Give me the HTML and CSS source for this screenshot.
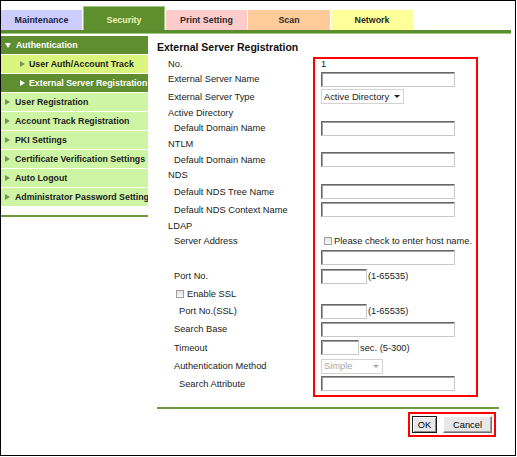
FILE: index.html
```html
<!DOCTYPE html>
<html>
<head>
<meta charset="utf-8">
<link rel="stylesheet" href="styles.css">
</head>
<body>
<div class="frame">
  <div class="tabs">
    <div class="tab tab-maint">Maintenance</div>
    <div class="tab tab-sec">Security</div>
    <div class="tab tab-print">Print Setting</div>
    <div class="tab tab-scan">Scan</div>
    <div class="tab tab-net">Network</div>
  </div>
  <div class="tabline"></div>
  <div class="body">
    <nav class="side">
      <ul class="menu">
        <li class="item dark"><span class="tri-down"></span>Authentication</li>
        <li class="item sub yel"><span class="tri"></span>User Auth/Account Track</li>
        <li class="item sub dark"><span class="tri"></span>External Server Registration</li>
        <li class="item"><span class="tri"></span>User Registration</li>
        <li class="item"><span class="tri"></span>Account Track Registration</li>
        <li class="item"><span class="tri"></span>PKI Settings</li>
        <li class="item"><span class="tri"></span>Certificate Verification Settings</li>
        <li class="item"><span class="tri"></span>Auto Logout</li>
        <li class="item"><span class="tri"></span>Administrator Password Setting</li>
      </ul>
      <div class="sideline"></div>
    </nav>
    <main class="main">
      <h1 class="title">External Server Registration</h1>
      <div class="form">
        <div class="row first h13"><div class="lbl">No.</div><div class="val">1</div></div>
        <div class="row h18"><div class="lbl">External Server Name</div><div class="val"><input class="txt" type="text"></div></div>
        <div class="row h17"><div class="lbl">External Server Type</div><div class="val"><div class="sel"><span>Active Directory</span><span class="arrow"></span></div></div></div>
        <div class="row h15"><div class="lbl">Active Directory</div><div class="val"></div></div>
        <div class="row h16"><div class="lbl s">Default Domain Name</div><div class="val"><input class="txt" type="text"></div></div>
        <div class="row h16"><div class="lbl">NTLM</div><div class="val"></div></div>
        <div class="row h15"><div class="lbl s">Default Domain Name</div><div class="val"><input class="txt" type="text"></div></div>
        <div class="row h16"><div class="lbl">NDS</div><div class="val"></div></div>
        <div class="row h17"><div class="lbl s">Default NDS Tree Name</div><div class="val"><input class="txt" type="text"></div></div>
        <div class="row h19"><div class="lbl s">Default NDS Context Name</div><div class="val"><input class="txt" type="text"></div></div>
        <div class="row h14"><div class="lbl">LDAP</div><div class="val"></div></div>
        <div class="row h15"><div class="lbl s">Server Address</div><div class="val"><input class="cb" type="checkbox"><span>Please check to enter host name.</span></div></div>
        <div class="row h19"><div class="lbl"></div><div class="val"><input class="txt" type="text"></div></div>
        <div class="row h18"><div class="lbl s">Port No.</div><div class="val"><input class="txt short" type="text"><span class="unit">(1-65535)</span></div></div>
        <div class="row h17"><div class="lbl cbl"><input class="cb cb-ssl" type="checkbox"><span>Enable SSL</span></div><div class="val"></div></div>
        <div class="row h18"><div class="lbl ss">Port No.(SSL)</div><div class="val"><input class="txt short" type="text"><span class="unit">(1-65535)</span></div></div>
        <div class="row h18"><div class="lbl s">Search Base</div><div class="val"><input class="txt" type="text"></div></div>
        <div class="row h19"><div class="lbl s">Timeout</div><div class="val"><input class="txt tiny" type="text"><span class="unit">sec. (5-300)</span></div></div>
        <div class="row h18"><div class="lbl s">Authentication Method</div><div class="val"><div class="sel dis"><span>Simple</span><span class="arrow"></span></div></div></div>
        <div class="row h17"><div class="lbl ss">Search Attribute</div><div class="val"><input class="txt" type="text"></div></div>
        <div class="row last h5"><div class="lbl"></div><div class="val"></div></div>
      </div>
      <div class="footline"></div>
      <div class="btnbox">
        <button class="btn ok" type="button">OK</button>
        <button class="btn cancel" type="button">Cancel</button>
      </div>
    </main>
  </div>
</div>
</body>
</html>
```

FILE: styles.css
```css
* { box-sizing: border-box; }
body {
  margin: 0;
  font-family: "Liberation Sans", Arial, sans-serif;
  color: #222;
  background: #fff;
}
.frame {
  width: 516px;
  height: 456px;
  border: 1px solid #000;
  overflow: hidden;
}
/* tabs */
.tabs {
  display: flex;
  align-items: flex-end;
  height: 29px;
}
.tab {
  width: 81px;
  height: 20px;
  margin-right: 1px;
  line-height: 20px;
  text-align: center;
  font-size: 8.9px;
  font-weight: bold;
  color: #2a2a2a;
  white-space: nowrap;
}
.tab-maint { background: #ccccff; color: #1c1c44; }
.tab-sec {
  width: 82px;
  height: 24px;
  padding-top: 3px;
  background: #5e8f2f;
  border: 1px solid #a3c77e;
  border-bottom: none;
  color: #eef2b4;
  line-height: 20px;
}
.tab-print { background: #ffcccc; }
.tab-scan { width: 82px; background: #ffcc99; }
.tab-net { width: 82px; background: #ffff99; }
.tabline {
  width: 510px;
  height: 4px;
  border-top: 3px solid #5b8c2e;
  background: #a2c881;
  margin-bottom: 2px;
}
/* layout */
.body { display: flex; }
.side { width: 147px; flex: none; }
.menu { list-style: none; margin: 0; padding: 0; }
.item {
  height: 19px;
  border-bottom: 1px solid #fff;
  display: flex;
  align-items: center;
  padding-left: 4px;
  font-size: 8.8px;
  font-weight: bold;
  white-space: nowrap;
  overflow: hidden;
  background: #cdf5a4;
  color: #1c1c1c;
}
.item.sub { padding-left: 19px; }
.item.yel { background: #d9f57e; }
.item.dark { background: #5e8e30; color: #fff; }
.tri {
  flex: none;
  width: 0;
  height: 0;
  border-top: 3px solid transparent;
  border-bottom: 3px solid transparent;
  border-left: 5px solid #7d8f5c;
  margin-right: 5px;
}
.item.sub .tri { margin-right: 4px; }
.item.dark .tri { border-left-color: #fff; }
.tri-down {
  flex: none;
  width: 0;
  height: 0;
  border-left: 3px solid transparent;
  border-right: 3px solid transparent;
  border-top: 5px solid #fff;
  margin-right: 5px;
}
.sideline {
  height: 2px;
  margin-top: 8px;
  background: #6d9c40;
}
.main { width: 342px; margin-left: 9px; }
.title {
  margin: 0;
  height: 21px;
  padding-top: 5px;
  font-size: 10.5px;
  line-height: 13px;
  font-weight: bold;
  color: #111;
  white-space: nowrap;
}
/* form rows */
.row {
  display: grid;
  grid-template-columns: 156px 165px;
}
.h5 { height: 5px; }
.h13 { height: 13px; }
.h14 { height: 14px; }
.h15 { height: 15px; }
.h16 { height: 16px; }
.h17 { height: 17px; }
.h18 { height: 18px; }
.h19 { height: 19px; }
.lbl {
  display: flex;
  align-items: center;
  padding-left: 11px;
  font-size: 9.3px;
  white-space: nowrap;
}
.lbl.s { padding-left: 17px; }
.lbl.ss { padding-left: 22px; }
.lbl.cbl { padding-left: 19px; }
.val {
  display: flex;
  align-items: center;
  padding-left: 6px;
  border-left: 2px solid #f00;
  border-right: 2px solid #f00;
  font-size: 9.3px;
  white-space: nowrap;
}
.row.first .val { border-top: 2px solid #f00; padding-bottom: 2px; }
.row.last .val { border-bottom: 2px solid #f00; }
.txt {
  width: 134px;
  height: 15px;
  margin: 0;
  padding: 0;
  border: 1px solid;
  border-color: #686868 #c9c9c9 #c9c9c9 #686868;
  box-shadow: inset 1px 1px 0 #a0a0a0;
  background: #fff;
}
.txt.short { width: 46px; }
.txt.tiny { width: 38px; }
.unit { margin-left: 1px; }
.sel {
  width: 83px;
  height: 15px;
  display: flex;
  align-items: center;
  justify-content: space-between;
  padding: 0 3px 0 2px;
  border: 1px solid #d3d3d3;
  background: #fff;
  font-size: 9.3px;
}
.arrow {
  width: 0;
  height: 0;
  border-left: 3px solid transparent;
  border-right: 3px solid transparent;
  border-top: 3px solid #222;
}
.sel.dis { width: 62px; color: #a8a8a8; }
.sel.dis .arrow { border-top-color: #a8a8a8; }
.cb {
  appearance: none;
  -webkit-appearance: none;
  width: 8px;
  height: 8px;
  margin: 0 2px 0 3px;
  border: 1px solid #a0a0a0;
  background: linear-gradient(#e2e2e2, #fafafa);
  flex: none;
}
.cb-ssl { margin: 0 3px 0 0; }
/* footer */
.footline {
  height: 2px;
  margin-top: 10px;
  background: #6d9c40;
}
.btnbox {
  display: flex;
  gap: 6px;
  width: fit-content;
  margin: 3px 3px 0 auto;
  padding: 2px;
  border: 2px solid #f00;
}
.btn {
  height: 17px;
  padding: 0;
  font: 9.3px "Liberation Sans", Arial, sans-serif;
  color: #000;
  background: #e8e8e8;
  border: 1px solid;
  border-color: #fff #707070 #707070 #fff;
  box-shadow: inset -1px -1px 0 #a0a0a0;
}
.btn.ok {
  width: 25px;
  border: 1px solid #1a1a1a;
  box-shadow: inset 1px 1px 0 #fff, inset -1px -1px 0 #8a8a8a;
}
.btn.cancel { width: 49px; }
```
